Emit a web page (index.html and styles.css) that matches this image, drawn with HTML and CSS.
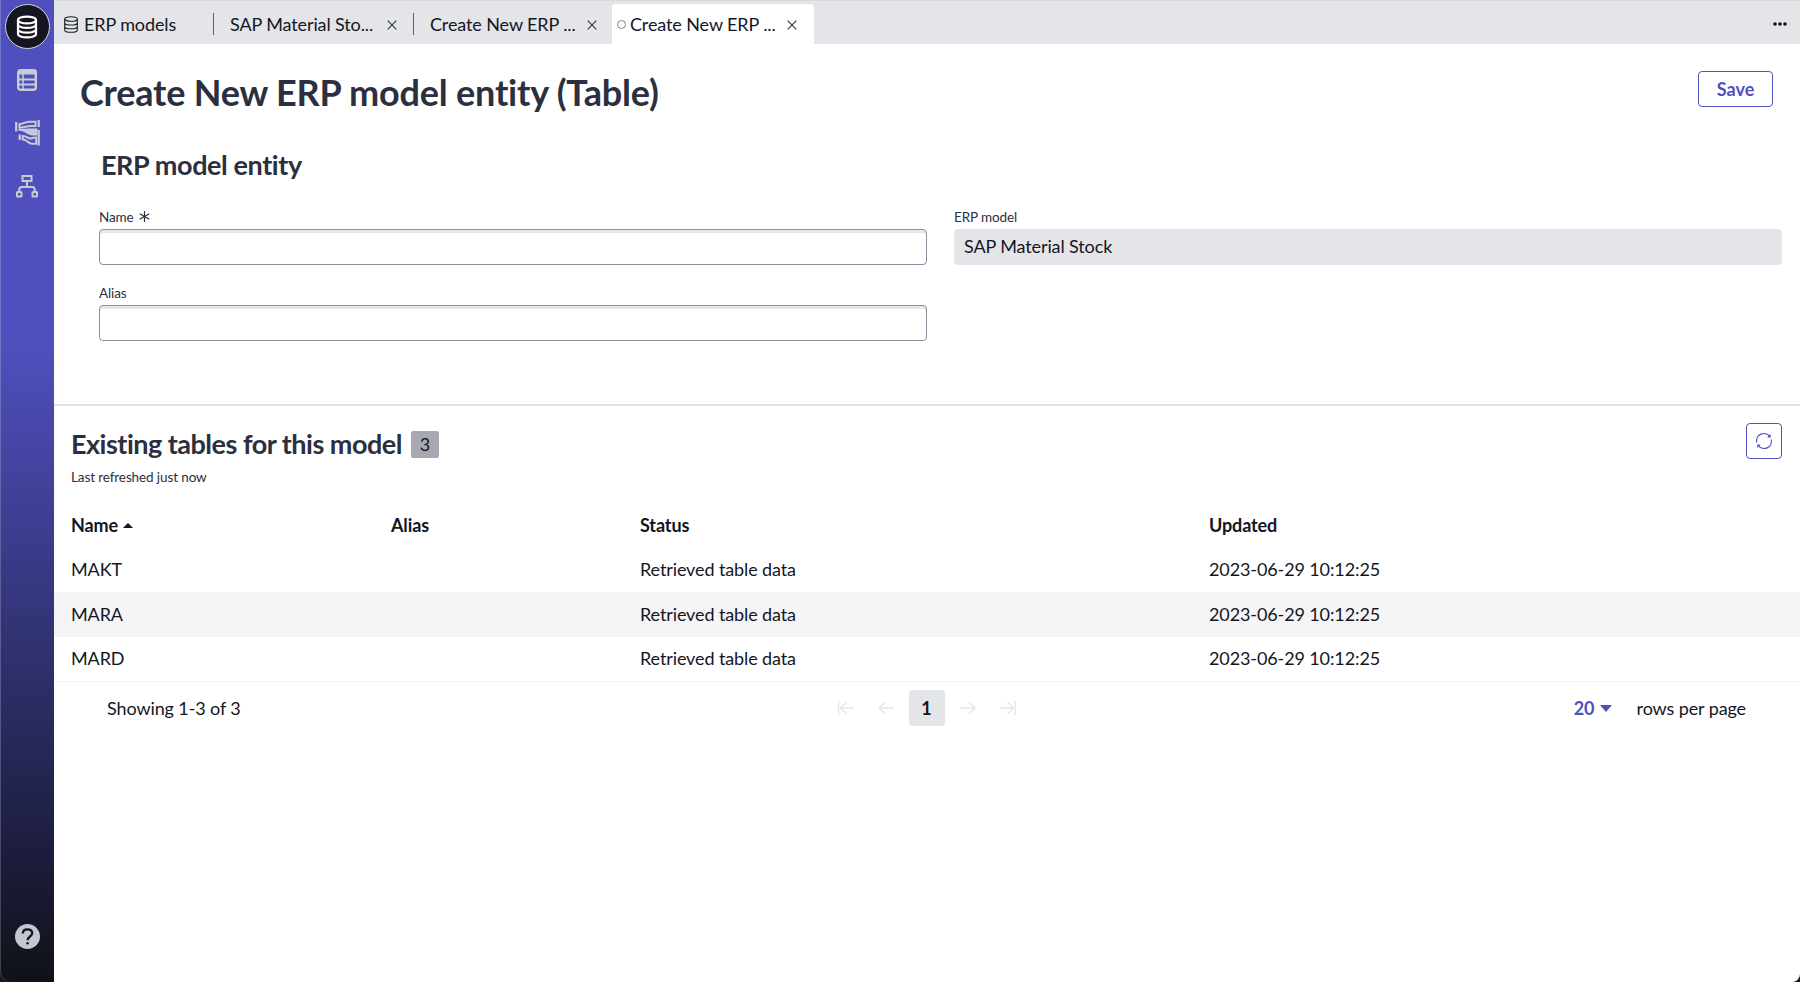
FILE: index.html
```html
<!DOCTYPE html>
<html lang="en">
<head>
    <meta charset="UTF-8">
    <meta name="viewport" content="width=device-width, initial-scale=1.0">
    <title>Create New ERP model entity</title>
    <link rel="stylesheet" href="styles.css">
</head>
<body>
    <nav class="sidebar">
        <a class="nav-item nav-active">
            <svg width="22" height="24" viewBox="0 0 22 24" fill="none" stroke="#fff" stroke-width="2.2">
                <ellipse cx="11" cy="5" rx="9" ry="3.4"/>
                <path d="M2 5v14c0 1.9 4 3.4 9 3.4s9-1.5 9-3.4V5M2 9.5c0 1.9 4 3.4 9 3.4s9-1.5 9-3.4M2 14.3c0 1.9 4 3.4 9 3.4s9-1.5 9-3.4"/>
            </svg>
        </a>
        <a class="nav-item">
            <svg width="20" height="22" viewBox="0 0 20 22" fill="none" stroke="#c8cbd6" stroke-width="2">
                <rect x="1.200" y="1.200" width="17.600" height="19.600" rx="2.200" stroke-width="2.400"/>
                <rect x="1" y="1" width="18" height="4.500" fill="#c8cbd6" stroke="none"/>
                <path d="M6 5v16" stroke-width="1.500"/>
                <path d="M1 10.500h18M1 15.500h18"/>
            </svg>
        </a>
        <a class="nav-item">
            <svg width="25" height="26" viewBox="0 0 25 26" fill="none" stroke="#c8cbd6" stroke-width="2">
                <path d="M1.200 2v9.500M23.700 0v7M23.700 10v15.500M4.700 14.500v5.500" stroke-width="2.200"/>
                <path d="M4.500 4c4 0 6-2.300 10-2.300h6v4.300h-5c-4 0-6 1.700-11 1.700z"/>
                <path d="M3.500 9c6 0 9-.5 12-.5h7v7h-5c-5 0-7-4.800-14-4.800z" fill="#c8cbd6" stroke="none"/>
                <path d="M7.700 16c4 0 5 2.500 8 2.500 2 0 2-1 4-1h1.500v6.300h-4c-5 0-4-4.300-9.500-4.300z"/>
            </svg>
        </a>
        <a class="nav-item">
            <svg width="22" height="24" viewBox="0 0 22 24" fill="none" stroke="#c8cbd6" stroke-width="2">
                <rect x="6.500" y="2" width="9" height="5"/>
                <rect x="1" y="18" width="4.500" height="4.500" rx="0.5"/>
                <rect x="16.500" y="18" width="4.500" height="4.500" rx="0.5"/>
                <path d="M11 7v6M3.300 18v-2.500c0-1.700.9-2.500 2.400-2.500h10.600c1.500 0 2.400.8 2.400 2.500v2.500"/>
            </svg>
        </a>
        <a class="nav-item nav-help">
            <span class="help-icon">
                <svg width="25" height="25" viewBox="0 0 25 25" fill="none" stroke="#15171f" stroke-width="2.3">
                    <path d="M7.8 9.6c0-2.5 1.900-4.200 4.700-4.200s4.700 1.600 4.700 3.900c0 3.200-4.600 3.200-4.600 6.900"/>
                    <circle cx="12.600" cy="19.300" r="1.300" fill="#15171f" stroke="none"/>
                </svg>
            </span>
        </a>
    </nav>

    <div class="content">
        <header class="tabs">
            <div class="tab tab-home">
                <svg width="14" height="17" viewBox="0 0 14 17" fill="none" stroke="#1b1d26" stroke-width="1.1">
                    <ellipse cx="7" cy="3" rx="6.3" ry="2.3"/>
                    <path d="M.7 3v11c0 1.300 2.800 2.300 6.300 2.300s6.300-1 6.300-2.300V3M.7 6.700C.7 8 3.500 9 7 9s6.300-1 6.300-2.300M.7 10.400c0 1.300 2.800 2.300 6.300 2.300s6.300-1 6.300-2.300"/>
                </svg>
                <span class="tab-label">ERP models</span>
            </div>
            <div class="tab tab-divided">
                <span class="tab-label">SAP Material Sto...</span>
                <svg class="tab-close" width="10" height="10" viewBox="0 0 10 10"><path d="M.7.7l8.600 8.600M9.300.7L.7 9.300"/></svg>
            </div>
            <div class="tab tab-divided">
                <span class="tab-label">Create New ERP ...</span>
                <svg class="tab-close" width="10" height="10" viewBox="0 0 10 10"><path d="M.7.7l8.600 8.600M9.300.7L.7 9.300"/></svg>
            </div>
            <div class="tab tab-current">
                <span class="unsaved"></span>
                <span class="tab-label">Create New ERP ...</span>
                <svg class="tab-close" width="10" height="10" viewBox="0 0 10 10"><path d="M.7.7l8.600 8.600M9.300.7L.7 9.300"/></svg>
            </div>
            <div class="more">
                <svg width="14" height="4" viewBox="0 0 14 4" fill="#111"><circle cx="2" cy="2" r="1.8"/><circle cx="7" cy="2" r="1.8"/><circle cx="12" cy="2" r="1.8"/></svg>
            </div>
        </header>

        <section class="entity">
            <div class="title-row">
                <h1>Create New ERP model entity (Table)</h1>
                <button class="save">Save</button>
            </div>
            <h2>ERP model entity</h2>
            <form class="fields">
                <div class="field">
                    <label for="name">Name
                        <svg width="11" height="11" viewBox="0 0 11 11" fill="none" stroke="#2b2f40" stroke-width="1.2"><path d="M5.500 0v11M.7 2.800l9.600 5.400M10.300 2.800L.7 8.200"/></svg>
                    </label>
                    <input type="text" id="name">
                </div>
                <div class="field">
                    <label for="model">ERP model</label>
                    <input type="text" id="model" value="SAP Material Stock" readonly>
                </div>
                <div class="field">
                    <label for="alias">Alias</label>
                    <input type="text" id="alias">
                </div>
            </form>
        </section>

        <section class="existing">
            <div class="existing-head">
                <div>
                    <div class="existing-title">
                        <h2>Existing tables for this model</h2>
                        <span class="count">3</span>
                    </div>
                    <p class="refreshed">Last refreshed just now</p>
                </div>
                <button class="refresh">
                    <svg width="18" height="18" viewBox="0 0 18 18" fill="none" stroke="#4f50bd" stroke-width="1.2">
                        <path d="M1.800 10.500A7.300 7.300 0 0 1 14.800 4.500M16.200 7.500A7.300 7.300 0 0 1 3.200 13.500"/>
                        <path d="M15.700 2v3.500h-3.500zM2.300 16v-3.500h3.500z" fill="#4f50bd" stroke="none"/>
                    </svg>
                </button>
            </div>
            <table>
                <thead>
                    <tr>
                        <th class="col-name">Name <span class="sort"></span></th>
                        <th class="col-alias">Alias</th>
                        <th class="col-status">Status</th>
                        <th>Updated</th>
                    </tr>
                </thead>
                <tbody>
                    <tr><td>MAKT</td><td></td><td>Retrieved table data</td><td>2023-06-29 10:12:25</td></tr>
                    <tr><td>MARA</td><td></td><td>Retrieved table data</td><td>2023-06-29 10:12:25</td></tr>
                    <tr><td>MARD</td><td></td><td>Retrieved table data</td><td>2023-06-29 10:12:25</td></tr>
                </tbody>
            </table>
            <footer class="pagination">
                <span>Showing 1-3 of 3</span>
                <div class="pages">
                    <svg width="16" height="14" viewBox="0 0 16 14"><path d="M.7 0v14M15.500 7H2.500M8.300 1.500L2.500 7l5.800 5.500"/></svg>
                    <svg width="16" height="14" viewBox="0 0 16 14"><path d="M15.500 7H1M6.800 1.500L1 7l5.800 5.500"/></svg>
                    <span class="page">1</span>
                    <svg width="16" height="14" viewBox="0 0 16 14"><path d="M.5 7H15M9.200 1.500L15 7l-5.800 5.500"/></svg>
                    <svg width="16" height="14" viewBox="0 0 16 14"><path d="M15.300 0v14M.5 7h13M7.700 1.500L13.500 7l-5.800 5.500"/></svg>
                </div>
                <div class="per-page">
                    <span class="size">20 <span class="caret"></span></span>
                    <span>rows per page</span>
                </div>
            </footer>
        </section>
    </div>
</body>
</html>
```

FILE: styles.css
```css
* {
    box-sizing: border-box;
}

html {
    background-color: #17181d;
}

body {
    margin: 0;
    height: 982px;
    display: flex;
    overflow: hidden;
    font-family: Lato, "Liberation Sans", sans-serif;
    font-size: 18px;
    line-height: 24px;
    letter-spacing: -0.11px;
    color: #14161f;
}

h1, h2, p {
    margin: 0;
}

h1, h2 {
    color: #2b2f40;
    white-space: nowrap;
}

button {
    background-color: #fff;
    border: 1px solid #5152c4;
    border-radius: 4px;
    color: #4f50bd;
    font-family: inherit;
    font-size: 18px;
    font-weight: bold;
    padding: 0;
}

.sidebar {
    width: 54px;
    flex-shrink: 0;
    display: flex;
    flex-direction: column;
    align-items: center;
    padding: 4px 0 28px;
    background: linear-gradient(#4f50bd 0%, #4f50bd 35%, #1b1c3a 88%, #101217 100%);
    box-shadow: inset 1px 0 0 rgba(255, 255, 255, 0.2);
    border-bottom-left-radius: 10px;
}

.nav-item {
    height: 53px;
    display: flex;
    align-items: center;
    justify-content: center;
}

.nav-active {
    width: 45px;
    height: 45px;
    margin-bottom: 4px;
    border: 1px solid #d5d5e2;
    border-radius: 50%;
    background-color: #161622;
}

.nav-help {
    height: 36px;
    margin-top: auto;
}

.help-icon {
    width: 25px;
    height: 25px;
    border-radius: 50%;
    background-color: #c4c7d0;
}

.content {
    flex: 1;
    min-width: 0;
    background-color: #fff;
    border-bottom-right-radius: 8px;
}

.tabs {
    height: 44px;
    display: flex;
    align-items: flex-end;
    background-color: #e4e5e9;
    border-top: 1px solid #d8d9df;
}

.tab {
    width: 200px;
    height: 40px;
    display: flex;
    align-items: center;
    position: relative;
    white-space: nowrap;
}

.tab-label {
    padding-bottom: 1px;
}

.tab-home {
    width: 159px;
    padding-left: 10px;
    gap: 6px;
}

.tab-divided {
    padding-left: 17px;
}

.tab-divided::before {
    content: "";
    position: absolute;
    left: 0;
    top: 9px;
    width: 1px;
    height: 22px;
    background-color: #5152c4;
}

.tab-current {
    width: 202px;
    margin-left: -1px;
    padding-left: 5px;
    background-color: #fff;
    border-radius: 4px 4px 0 0;
}

.tab-close {
    position: absolute;
    left: 174px;
    top: 16px;
    fill: none;
    stroke: #333746;
    stroke-width: 1.2;
}

.tab-current .tab-close {
    left: 175px;
}

.unsaved {
    width: 9px;
    height: 9px;
    margin-right: 4px;
    border: 1px solid #7d8293;
    border-radius: 50%;
}

.more {
    margin-left: auto;
    padding-right: 13px;
    height: 40px;
    display: flex;
    align-items: center;
}

.entity {
    height: 362px;
    padding: 27px 18px 0 26px;
    border-bottom: 2px solid #e2e3e8;
}

.title-row {
    display: flex;
    justify-content: space-between;
    padding-right: 9px;
}

h1 {
    font-size: 36px;
    line-height: 42px;
    letter-spacing: -0.2px;
}

.save {
    width: 75px;
    height: 36px;
}

h2 {
    font-size: 27px;
    line-height: 36px;
    letter-spacing: -0.5px;
}

.entity h2 {
    margin: 34px 0 0 21px;
    letter-spacing: -0.4px;
}

.fields {
    display: grid;
    grid-template-columns: 1fr 1fr;
    gap: 16px 27px;
    margin: 22px 0 0 19px;
}

.field label {
    display: flex;
    align-items: center;
    gap: 5px;
    height: 24px;
    padding-bottom: 1px;
    font-size: 13.5px;
    color: #2b2f40;
}

.field input {
    display: block;
    width: 100%;
    height: 36px;
    padding: 0 9px 2px;
    border: 1px solid #8b8f9e;
    border-radius: 4px;
    box-shadow: inset 0 3px 0 #e6e7e8;
    font-family: inherit;
    font-size: 18px;
    letter-spacing: inherit;
    color: #14161f;
}

.field input[readonly] {
    border-color: #e4e5e9;
    background-color: #e4e5e9;
    box-shadow: none;
}

.existing-head {
    height: 97px;
    display: flex;
    justify-content: space-between;
    padding: 17px 18px 0 17px;
}

.existing-title {
    display: flex;
    align-items: center;
    height: 42px;
    gap: 9px;
}

.count {
    width: 28px;
    height: 27px;
    line-height: 27px;
    text-align: center;
    background-color: #a7a8b1;
    border-radius: 2px;
}

.refreshed {
    font-size: 13.5px;
    color: #2b2f40;
}

.refresh {
    width: 36px;
    height: 36px;
    display: flex;
    align-items: center;
    justify-content: center;
}

table {
    width: 100%;
    border-collapse: collapse;
    table-layout: fixed;
}

th, td {
    height: 44.5px;
    padding: 0 0 1px 17px;
    text-align: left;
}

.col-name {
    width: 320px;
}

.col-alias {
    width: 249px;
}

.col-status {
    width: 569px;
}

tbody tr:nth-child(even) {
    background-color: #f5f5f7;
}

.sort, .caret {
    display: inline-block;
    border: 5px solid transparent;
    vertical-align: middle;
}

.sort {
    border-top: 0;
    border-bottom-color: #14161f;
    margin: 0 0 3px 1px;
}

.caret {
    border-width: 7px 6px 0;
    border-top-color: #4f50bd;
    margin: 0 0 3px 1px;
}

.pagination {
    height: 53px;
    display: grid;
    grid-template-columns: 1fr auto 1fr;
    align-items: center;
    padding: 0 54px 0 53px;
    border-top: 1px solid #f3f3f5;
}

.pages {
    display: flex;
    align-items: center;
    gap: 24px;
}

.pages svg {
    fill: none;
    stroke: #e4e5e9;
    stroke-width: 1.3;
}

.page {
    width: 36px;
    height: 36px;
    margin: 0 -9px;
    line-height: 36px;
    text-align: center;
    font-weight: bold;
    background-color: #e4e5e9;
    border-radius: 4px;
}

.per-page {
    display: flex;
    justify-content: flex-end;
    gap: 25px;
}

.size {
    font-weight: bold;
    color: #4f50bd;
}
```
